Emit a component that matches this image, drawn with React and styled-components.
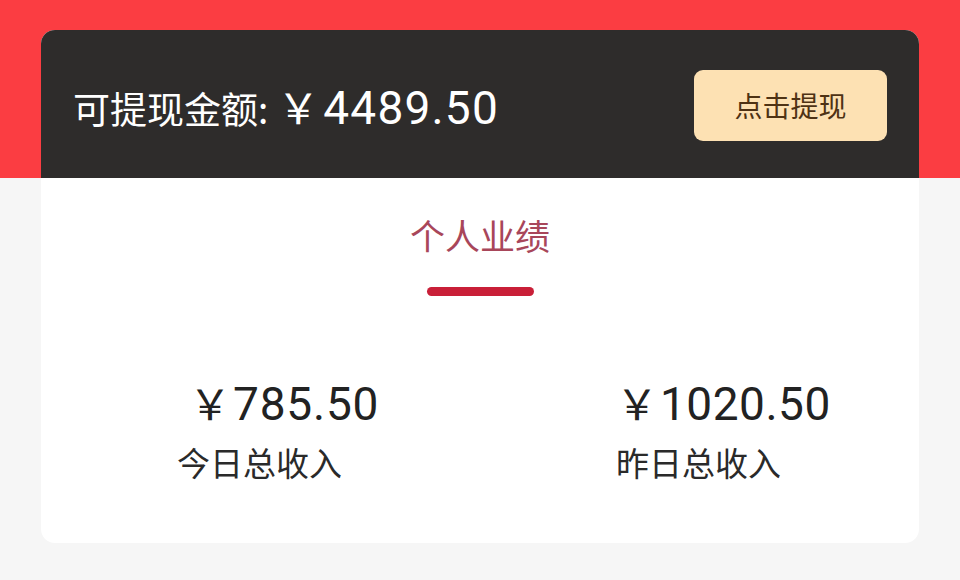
import React from "react";
import styled, { createGlobalStyle } from "styled-components";

const GlobalStyle = createGlobalStyle`
  html, body {
    margin: 0;
    padding: 0;
  }
  body {
    width: 960px;
    height: 580px;
    overflow: hidden;
    background: #f6f6f6;
    font-family: "Noto Sans CJK SC", "Noto Sans", sans-serif;
  }
`;

const Page = styled.div`
  width: 960px;
  height: 580px;
  background: linear-gradient(to bottom, #fb3d42 0, #fb3d42 178px, #f6f6f6 178px);
  padding: 30px 41px 0;
  box-sizing: border-box;
`;

const Card = styled.div`
  background: #fff;
  border-radius: 14px;
  overflow: hidden;
  height: 513px;
`;

const Header = styled.div`
  height: 148px;
  background: #2e2c2b;
  display: flex;
  align-items: center;
  justify-content: space-between;
  padding: 0 32px 0 32px;
  box-sizing: border-box;
`;

const Balance = styled.div`
  color: #fff;
  font-size: 37px;
  display: flex;
  align-items: baseline;
  margin-top: 2px;
`;

const Digits = styled.span`
  font-family: "Roboto", "Noto Sans CJK SC", sans-serif;
  font-size: 46px;
  font-weight: 400;
  letter-spacing: ${p => p.$spacing || 0.8}px;
`;

const Yen = styled.span`
  font-family: "Noto Sans CJK SC", sans-serif;
  font-size: 42px;
  margin: 0 ${p => p.$after || 2}px 0 ${p => p.$gap}px;
`;

const Button = styled.button`
  width: 193px;
  height: 71px;
  border: none;
  border-radius: 9px;
  background: #fde1b3;
  color: #4e3214;
  font-family: inherit;
  font-size: 28px;
  margin-top: 2px;
`;

const Tab = styled.div`
  display: flex;
  flex-direction: column;
  align-items: center;
  padding-top: 32px;
`;

const TabTitle = styled.div`
  color: #a8465a;
  font-size: 35px;
  line-height: 50px;
`;

const TabBar = styled.div`
  width: 107px;
  height: 9px;
  border-radius: 5px;
  background: #c91f38;
  margin-top: 27px;
`;

const Stats = styled.div`
  display: grid;
  grid-template-columns: 1fr 1fr;
  margin-top: 78px;
`;

const Stat = styled.div`
  padding-left: 136px;
  display: flex;
  flex-direction: column;
`;

const Amount = styled.div`
  display: flex;
  align-items: baseline;
  color: #222;
  line-height: 56px;
  height: 56px;
`;

const Label = styled.div`
  font-size: 33px;
  color: #2a2a2a;
  line-height: 46px;
  margin-top: 9px;
`;

export default function App() {
  return (
    <>
      <GlobalStyle />
      <Page>
        <Card>
          <Header>
            <Balance>
              可提现金额:
              <Yen $gap={9} $after={4}>￥</Yen>
              <Digits $spacing={1.2}>4489.50</Digits>
            </Balance>
            <Button>点击提现</Button>
          </Header>
          <Tab>
            <TabTitle>个人业绩</TabTitle>
            <TabBar />
          </Tab>
          <Stats>
            <Stat>
              <Amount>
                <Yen $gap={12}>￥</Yen>
                <Digits>785.50</Digits>
              </Amount>
              <Label>今日总收入</Label>
            </Stat>
            <Stat>
              <Amount>
                <Yen $gap={0}>￥</Yen>
                <Digits $spacing={0.5}>1020.50</Digits>
              </Amount>
              <Label>昨日总收入</Label>
            </Stat>
          </Stats>
        </Card>
      </Page>
    </>
  );
}
